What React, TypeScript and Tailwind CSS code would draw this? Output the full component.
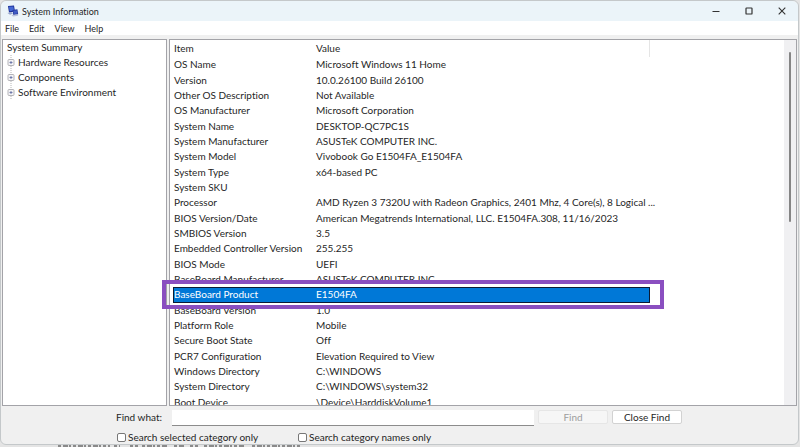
import { useState } from "react";

const MENU = ["File", "Edit", "View", "Help"];

const CATEGORIES = ["Hardware Resources", "Components", "Software Environment"];

const ROWS = [
  ["OS Name", "Microsoft Windows 11 Home"],
  ["Version", "10.0.26100 Build 26100"],
  ["Other OS Description", "Not Available"],
  ["OS Manufacturer", "Microsoft Corporation"],
  ["System Name", "DESKTOP-QC7PC1S"],
  ["System Manufacturer", "ASUSTeK COMPUTER INC."],
  ["System Model", "Vivobook Go E1504FA_E1504FA"],
  ["System Type", "x64-based PC"],
  ["System SKU", ""],
  [
    "Processor",
    "AMD Ryzen 3 7320U with Radeon Graphics, 2401 Mhz, 4 Core(s), 8 Logical ...",
  ],
  [
    "BIOS Version/Date",
    "American Megatrends International, LLC. E1504FA.308, 11/16/2023",
  ],
  ["SMBIOS Version", "3.5"],
  ["Embedded Controller Version", "255.255"],
  ["BIOS Mode", "UEFI"],
  ["BaseBoard Manufacturer", "ASUSTeK COMPUTER INC."],
  ["BaseBoard Product", "E1504FA"],
  ["BaseBoard Version", "1.0"],
  ["Platform Role", "Mobile"],
  ["Secure Boot State", "Off"],
  ["PCR7 Configuration", "Elevation Required to View"],
  ["Windows Directory", "C:\\WINDOWS"],
  ["System Directory", "C:\\WINDOWS\\system32"],
  ["Boot Device", "\\Device\\HarddiskVolume1"],
];

function AppIcon() {
  return (
    <svg width="12" height="12" viewBox="0 0 12 12" aria-hidden="true">
      <path d="M1 1 7 0.5 8 6.5 2 7.5z" fill="#1b2f96" />
      <path d="M1.9 1.8 6.3 1.5 7 5.6 2.6 6.3z" fill="#4468d4" />
      <path d="M0.5 8 4 7 6 8.5 3 9.7z" fill="#98a6cc" />
      <path d="M5.5 5 10.4 4.3 11.2 9.2 6.3 10z" fill="#24389a" />
      <path d="M6.3 5.8 9.8 5.3 10.4 8.5 6.9 9.1z" fill="#3f5cc4" />
      <path d="M4.5 10 9.5 9.6 11.5 10.8 6 11.6z" fill="#b7c0da" />
    </svg>
  );
}

function TitleBar() {
  return (
    <header className="flex h-5 items-center rounded-t-md bg-[#ebf4f9] pl-1.5">
      <AppIcon />
      <h1 className="ml-[3px] flex-1 text-[9px]">System Information</h1>
      <button aria-label="Minimize" className="flex w-[33px] justify-center">
        <svg width="8" height="8" viewBox="0 0 8 8" stroke="#333">
          <path d="M0.5 4.5h7" />
        </svg>
      </button>
      <button aria-label="Maximize" className="flex w-[33px] justify-center">
        <svg width="8" height="8" viewBox="0 0 8 8" fill="none" stroke="#333">
          <rect x="1" y="1" width="6" height="6" rx="0.6" strokeWidth="1.2" />
        </svg>
      </button>
      <button aria-label="Close" className="flex w-[33px] justify-center">
        <svg width="8" height="8" viewBox="0 0 8 8" stroke="#333">
          <path d="M0.7 0.7 7.3 7.3M7.3 0.7 0.7 7.3" strokeWidth="1.1" />
        </svg>
      </button>
    </header>
  );
}

function CategoryTree() {
  return (
    <nav className="w-[165px] shrink-0 border border-[#a3a3a8] bg-white pl-1 leading-[15px]">
      <span>System Summary</span>
      <ul>
        {CATEGORIES.map((name) => (
          <li key={name} className="flex items-center gap-[3px]">
            <svg width="8" height="15" viewBox="0 0 8 15" fill="none">
              <path d="M4 0v4M4 11v4" stroke="#b5b5b5" strokeDasharray="1 1" />
              <rect x="1" y="4.5" width="6" height="6" rx="1" fill="#f4f4f6" stroke="#b4b4b9" />
              <path d="M2.5 7.5h3M4 6v3" stroke="#5b68a0" strokeWidth="0.8" />
            </svg>
            {name}
          </li>
        ))}
      </ul>
    </nav>
  );
}

function Details() {
  const [selected, setSelected] = useState("BaseBoard Product");

  return (
    <section className="relative min-w-0 flex-1 border border-[#a3a3a8] bg-white">
      <div className="flex h-full overflow-hidden">
        <div className="min-w-0 flex-1 pl-[3px]">
          <table className="h-[370px] w-[477px] table-fixed border-collapse text-left">
            <thead>
              <tr className="h-[17px]">
                <th className="w-[142px] p-0 pl-px font-normal">Item</th>
                <th className="border-r border-[#e5e5e5] p-0 pl-px font-normal">
                  Value
                </th>
              </tr>
            </thead>
            <tbody>
              {ROWS.map(([item, value]) => (
                <tr
                  key={item}
                  onClick={() => setSelected(item)}
                  className={
                    item === selected
                      ? "bg-[#0078d7] text-white outline-1 -outline-offset-1 outline-[#0b1a33]"
                      : ""
                  }
                >
                  <td className="p-0 pl-px whitespace-nowrap">{item}</td>
                  <td className="p-0 pl-px whitespace-nowrap">{value}</td>
                </tr>
              ))}
            </tbody>
          </table>
        </div>
        <div className="w-3 bg-[#f0f0f2] pt-3">
          <div className="mx-auto h-[170px] w-0.5 rounded-full bg-[#858585]" />
        </div>
      </div>
      {/* callout around the baseboard row */}
      <div className="pointer-events-none absolute top-[240px] -left-2 h-[29px] w-[502px] border-4 border-[#8a4fc0]" />
    </section>
  );
}

function FindBar() {
  return (
    <form className="grid grid-cols-[165px_362px_auto] gap-x-1 gap-y-1 px-0.5 pt-1">
      <label htmlFor="find" className="pr-1.5 text-right">
        Find what:
      </label>
      <input id="find" className="h-4 border-b border-[#8c8c8c] bg-white px-1" />
      <div className="flex gap-1">
        <button
          type="button"
          disabled
          className="h-[14px] w-[70px] rounded-xs border border-[#e6e6e6] bg-[#f6f6f6] leading-3 text-[#9d9d9d]"
        >
          Find
        </button>
        <button
          type="button"
          className="h-[14px] w-[70px] rounded-xs border border-[#d2d2d2] bg-white leading-3"
        >
          Close Find
        </button>
      </div>
      <div className="col-span-3 flex pl-[114px] leading-[14px]">
        <label className="flex w-[181px] items-center gap-0.5">
          <input type="checkbox" className="size-[9px] appearance-none rounded-xs border border-[#777] bg-white" />
          Search selected category only
        </label>
        <label className="flex items-center gap-0.5">
          <input type="checkbox" className="size-[9px] appearance-none rounded-xs border border-[#777] bg-white" />
          Search category names only
        </label>
      </div>
    </form>
  );
}

export default function App() {
  return (
    <div className="h-screen overflow-hidden bg-[#e4e4e4] font-[Lato,sans-serif] text-[10px] leading-[15px] text-[#1f1f1f] [font-variant-ligatures:none]">
      <div className="mr-px flex h-[445px] flex-col rounded-md border border-[#c4c8ca] bg-[#f0f0f0]">
        <TitleBar />
        <nav className="flex h-[14px] gap-2.5 bg-white pl-1 text-[9px]">
          {MENU.map((item) => (
            <button key={item}>{item}</button>
          ))}
        </nav>
        <main className="mt-1 flex h-[367px] gap-0.5 px-px">
          <CategoryTree />
          <Details />
        </main>
        <FindBar />
      </div>
      {/* edge of the page behind the window */}
      <svg className="ml-[58px] block" width="245" height="2" aria-hidden="true">
        <path
          d="M0 1h52M56 1h6M72 1h8M84 1h26M116 1h10M132 1h8M146 1h40M194 1h50"
          stroke="#8a8a8a"
          strokeWidth="2"
          strokeDasharray="3 2 5 1 2 2"
        />
      </svg>
    </div>
  );
}
